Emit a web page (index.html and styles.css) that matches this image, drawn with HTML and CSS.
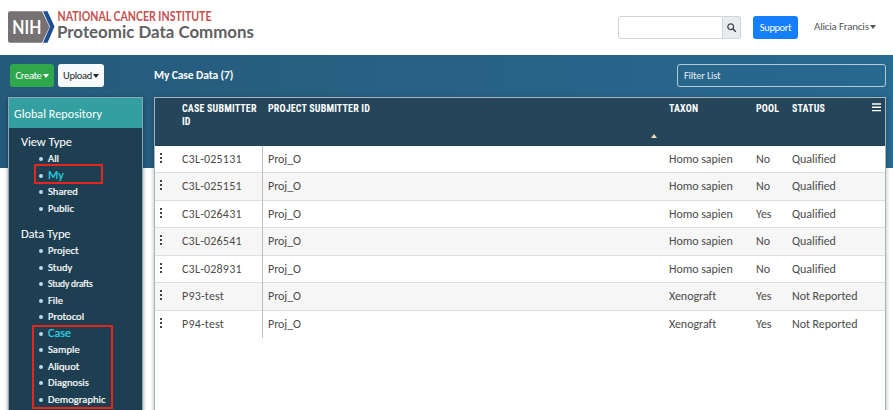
FILE: index.html
```
<!DOCTYPE html>
<html lang="en">
<head>
<meta charset="utf-8">
<title>Proteomic Data Commons</title>
<link rel="stylesheet" href="styles.css">
</head>
<body>
<header class="top">
  <svg class="logo" width="250" height="36" viewBox="0 0 250 36" role="img" aria-label="NIH National Cancer Institute Proteomic Data Commons">
    <path fill="#767172" d="M2 .3H34L41.500 16 34 31.700H2Q0 31.700 0 29.700V2.300Q0 .3 2 .3Z"/>
    <path fill="#1d4f96" d="M35 .3H39.500L46.500 15.500 39.500 31.700H35L42 15.700Z"/>
    <text class="nih" x="4.300" y="22.700" textLength="29" lengthAdjust="spacingAndGlyphs">NIH</text>
    <text class="nci" x="49.500" y="10" textLength="154" lengthAdjust="spacingAndGlyphs">NATIONAL CANCER INSTITUTE</text>
    <text class="pdc" x="49" y="26.700" textLength="197" lengthAdjust="spacingAndGlyphs">Proteomic Data Commons</text>
  </svg>
  <div class="search">
    <input class="search-input" type="text" aria-label="Search">
    <button class="search-btn" aria-label="Search"><svg width="9" height="9" viewBox="0 0 9 9"><circle cx="3.700" cy="3.700" r="2.900" fill="none" stroke="#40464c" stroke-width="1.300"/><path d="M5.800 5.800 8.300 8.300" stroke="#40464c" stroke-width="1.600" stroke-linecap="round"/></svg></button>
  </div>
  <button class="btn support">Support</button>
  <div class="user">Alicia Francis<i class="caret"></i></div>
</header>
<main class="main">
  <aside class="side">
    <div class="actions">
      <button class="btn create">Create<i class="caret"></i></button>
      <button class="btn upload">Upload<i class="caret"></i></button>
      <span class="count">0</span>
    </div>
    <nav class="panel">
      <h2 class="panel-title">Global Repository</h2>
      <h3 class="group">View Type</h3>
      <ul class="list view">
        <li>All</li>
        <li class="active">My<span class="mark mark-my"></span></li>
        <li>Shared</li>
        <li>Public</li>
      </ul>
      <h3 class="group">Data Type</h3>
      <ul class="list">
        <li>Project</li>
        <li>Study</li>
        <li class="small">Study drafts</li>
        <li>File</li>
        <li>Protocol</li>
        <li class="active">Case<span class="mark mark-case"></span></li>
        <li>Sample</li>
        <li>Aliquot</li>
        <li>Diagnosis</li>
        <li>Demographic</li>
      </ul>
    </nav>
  </aside>
  <section class="content">
    <div class="bar">
      <h1 class="title">My Case Data (7)</h1>
      <input class="filter" type="text" placeholder="Filter List" aria-label="Filter List">
    </div>
    <div class="grid">
      <div class="row head">
        <span></span><span>CASE SUBMITTER ID</span><span>PROJECT SUBMITTER ID<i class="sort"></i></span><span>TAXON</span><span>POOL</span><span>STATUS</span>
        <svg class="menu" width="9" height="9" viewBox="0 0 9 9"><path d="M0 1H9M0 4.300H9M0 7.600H9" stroke="#fff" stroke-width="1.400"/></svg>
      </div>
      <div class="row"><i class="dots"></i><span class="id">C3L-025131</span><span class="proj">Proj_O</span><span>Homo sapien</span><span>No</span><span>Qualified</span></div>
      <div class="row"><i class="dots"></i><span class="id">C3L-025151</span><span class="proj">Proj_O</span><span>Homo sapien</span><span>No</span><span>Qualified</span></div>
      <div class="row"><i class="dots"></i><span class="id">C3L-026431</span><span class="proj">Proj_O</span><span>Homo sapien</span><span>Yes</span><span>Qualified</span></div>
      <div class="row"><i class="dots"></i><span class="id">C3L-026541</span><span class="proj">Proj_O</span><span>Homo sapien</span><span>No</span><span>Qualified</span></div>
      <div class="row"><i class="dots"></i><span class="id">C3L-028931</span><span class="proj">Proj_O</span><span>Homo sapien</span><span>No</span><span>Qualified</span></div>
      <div class="row"><i class="dots"></i><span class="id">P93-test</span><span class="proj">Proj_O</span><span>Xenograft</span><span>Yes</span><span>Not Reported</span></div>
      <div class="row"><i class="dots"></i><span class="id">P94-test</span><span class="proj">Proj_O</span><span>Xenograft</span><span>Yes</span><span>Not Reported</span></div>
    </div>
  </section>
</main>
</body>
</html>
```
FILE: styles.css
```
* { box-sizing: border-box; }
body { margin: 0; height: 410px; overflow: hidden; background: #fff; font-family: Carlito, Lato, sans-serif; font-size: 12px; color: #4b4b4b; }
button, input { font-family: inherit; margin: 0; }
h1, h2, h3, ul { margin: 0; padding: 0; font-weight: 400; }

.top { display: flex; align-items: flex-start; height: 55px; padding: 11px 18px 0 8px; }
.logo { overflow: visible; margin-right: 360px; flex: none; }
.nih { font: 700 19px Lato, sans-serif; fill: #fff; }
.nci { font: 700 12.500px Lato, sans-serif; fill: #c4504e; }
.pdc { font: 700 17px Lato, sans-serif; fill: #5e6062; }
.search { display: flex; width: 123px; height: 23px; margin-top: 5px; flex: none; }
.search-input { width: 105px; border: 1px solid #ced4da; border-radius: 3px 0 0 3px; padding: 0 5px; }
.search-btn { width: 18px; padding: 0; display: flex; align-items: center; justify-content: center; border: 1px solid #ced4da; border-left: 0; border-radius: 0 3px 3px 0; background: #e9ecef; }
.btn { height: 23px; border: 0; border-radius: 3px; padding: 0; font-size: 10.500px; letter-spacing: -.3px; font-weight: 500; display: flex; align-items: center; justify-content: center; flex: none; }
.support { width: 45px; margin: 5px 0 0 12px; background: #157efb; color: #fff; letter-spacing: -.4px; }
.user { margin: 9px 0 0 16px; font-size: 11px; letter-spacing: -.2px; line-height: 14px; display: flex; align-items: center; white-space: nowrap; color: #555; }
.caret { width: 0; height: 0; border: 3px solid transparent; border-top: 4px solid currentColor; border-bottom: 0; margin-left: 1px; }

.main { display: flex; gap: 11px; height: 355px; padding: 9px 7px 0 8px; background: linear-gradient(90deg, #265a7b, #286990) 0 0 / 100% 113px no-repeat; }
.side { width: 135px; flex: none; }
.actions { display: flex; gap: 4px; padding-left: 2px; height: 33px; }
.create { width: 44px; background: #2fa84c; color: #fff; }
.upload { width: 46px; background: #f8f9fa; color: #212529; }
.count { font-size: 9px; line-height: 22px; color: #355468; margin-left: -2px; }
.panel { height: 330px; background: #1e3f52; border: 1px solid #8ba9b4; border-bottom: 0; box-shadow: 0 1px 4px rgba(0, 0, 0, .4); color: #fff; letter-spacing: .05px; }
.panel-title { height: 30px; line-height: 32px; padding-left: 5px; background: #349fa0; font-size: 12px; font-weight: 500; letter-spacing: .1px; }
.group { padding: 6px 0 0 12px; height: 22px; font-size: 12.500px; line-height: 15px; font-weight: 500; letter-spacing: -.1px; }
.list { list-style: none; font-size: 10.500px; font-weight: 500; -webkit-text-stroke: .2px; }
.list.view { height: 70px; }
.list li { position: relative; height: 16.500px; line-height: 17px; padding-left: 39px; }
.list li::before { content: ""; position: absolute; left: 30px; top: 7px; width: 4px; height: 4px; border-radius: 50%; background: #b7dbec; }
.list .active { color: #2cd5e2; font-size: 12px; }
.list .small { font-size: 9.500px; line-height: 18px; letter-spacing: -.15px; }
.mark { position: absolute; border: 2px solid #e4261c; }
.mark-my { left: 25px; top: -3px; width: 69px; height: 20px; }
.mark-case { left: 23px; top: 0; width: 81px; height: 84px; }

.content { flex: 1; }
.bar { display: flex; justify-content: space-between; height: 33px; }
.title { font-size: 11.500px; font-weight: 700; line-height: 23px; letter-spacing: -.1px; color: #fff; }
.filter { width: 209px; height: 23px; padding: 0 6px; border: 1px solid #b5cbd8; border-radius: 3px; background: transparent; color: #fff; font-size: 10.500px; letter-spacing: -.2px; }
.filter::placeholder { color: #e4ecf1; opacity: 1; }
.grid { height: 330px; border: 1px solid #a9b5bc; border-bottom: 0; background: #fff; box-shadow: 0 1px 4px rgba(0, 0, 0, .3); }
.row { display: grid; grid-template-columns: 27px 80px 407px 87px 36px 1fr; height: 27.500px; line-height: 26px; border-bottom: 1px solid #dedede; letter-spacing: -.05px; }
.id { letter-spacing: .2px; }
.row > :nth-child(3) { padding-left: 6px; }
.row:nth-child(odd) { background: #f6f6f6; }
.row:last-child { border-bottom-color: transparent; background: #fff; }
.row > .proj { border-left: 1px solid #c0c0c0; margin-bottom: -1px; padding-left: 5px; }
.row.head { position: relative; height: 47.500px; padding-top: 4px; background: #24455a; border: 0; color: #fff; font: 700 10px/13px Roboto, sans-serif; font-stretch: 85%; letter-spacing: .15px; }
.head > span { position: relative; }
.sort { position: absolute; right: 12px; bottom: 8px; border: 3px solid transparent; border-bottom: 4px solid #fbdcae; border-top: 0; }
.menu { position: absolute; right: 4px; top: 5px; }
.dots { width: 2px; height: 10px; margin: 7px 0 0 5px; background: repeating-linear-gradient(#444 0 2px, transparent 2px 4px); }
```
